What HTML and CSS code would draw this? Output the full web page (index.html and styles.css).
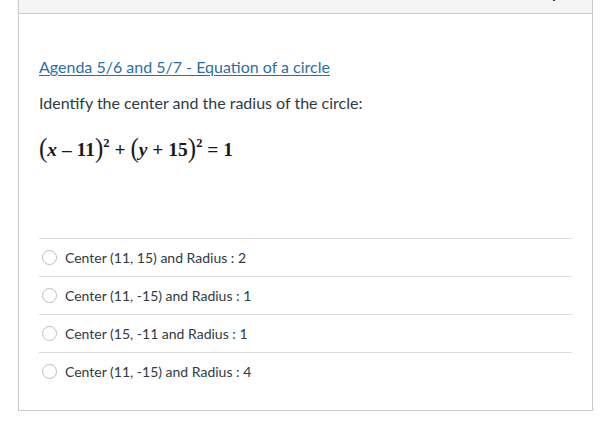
FILE: index.html
```html
<!DOCTYPE html>
<html>
<head>
<meta charset="utf-8">
<link rel="stylesheet" href="styles.css">
</head>
<body>
<div class="quiz">
  <div class="quiz-header">
    <span class="q-name">Question 4</span>
    <span class="q-pts">1 pts</span>
  </div>
  <div class="quiz-body">
    <p class="link-line"><a class="link" href="#">Agenda 5/6 and 5/7 - Equation of a circle</a></p>
    <p class="prompt">Identify the center and the radius of the circle:</p>
    <div class="equation"><span class="par">(</span><i>x</i> <span class="op">–</span> 11<span class="par">)</span><sup>2</sup> <span class="op">+</span> <span class="par">(</span><i>y</i> <span class="op">+</span> 15<span class="par">)</span><sup>2</sup> <span class="op">=</span> 1</div>
    <div class="answers">
      <label class="answer"><span class="radio"></span><span>Center (11, 15) and Radius : 2</span></label>
      <label class="answer"><span class="radio"></span><span>Center (11, -15) and Radius : 1</span></label>
      <label class="answer"><span class="radio"></span><span>Center (15, -11 and Radius : 1</span></label>
      <label class="answer"><span class="radio"></span><span>Center (11, -15) and Radius : 4</span></label>
    </div>
  </div>
</div>
</body>
</html>
```

FILE: styles.css
```css
html, body {
  margin: 0;
  padding: 0;
  background: #ffffff;
  overflow: hidden;
}
body {
  font-family: Lato, "Open Sans", sans-serif;
  color: #2d3b45;
}
.quiz {
  margin: -28px 0 0 18px;
  width: 573px;
  border: 1px solid #c7cdd1;
  box-shadow: 0 1px 1px rgba(0, 0, 0, 0.12);
  background: #fff;
}
.quiz-header {
  height: 33px;
  padding: 7px 18px 0 23px;
  background: #f5f5f5;
  border-bottom: 1px solid #c7cdd1;
  display: flex;
  justify-content: space-between;
  font-weight: bold;
  font-size: 16px;
  line-height: 24px;
  color: #2d3b45;
}
.quiz-body {
  padding: 41px 20px 20px 20px;
}
.link-line {
  margin: 0;
  font-size: 16px;
  line-height: 24px;
}
.link {
  color: #2c6ea6;
  text-decoration: underline;
  text-underline-offset: 2px;
}
.prompt {
  margin: 12px 0 0 0;
  font-size: 16px;
  line-height: 24px;
}
.equation {
  margin-top: 18px;
  font-family: "Liberation Serif", "Times New Roman", serif;
  font-weight: bold;
  font-size: 19.5px;
  line-height: 30px;
  color: #1a1a1a;
  white-space: nowrap;
}
.equation i {
  font-style: italic;
}
.equation .par {
  font-size: 25px;
  font-weight: normal;
  display: inline-block;
  transform: scaleY(1.08);
}
.equation sup {
  font-size: 12.5px;
  vertical-align: 9px;
  line-height: 0;
}
.answers {
  margin-top: 73px;
}
.answer {
  display: flex;
  align-items: center;
  gap: 8px;
  height: 37px;
  border-top: 1px solid #dcdcdc;
  font-size: 14px;
  color: #2d3b45;
}
.radio {
  margin-left: 3px;
  width: 13px;
  height: 13px;
  border: 1px solid #b9bec2;
  border-radius: 50%;
  background: #fff;
  flex: none;
}
```
